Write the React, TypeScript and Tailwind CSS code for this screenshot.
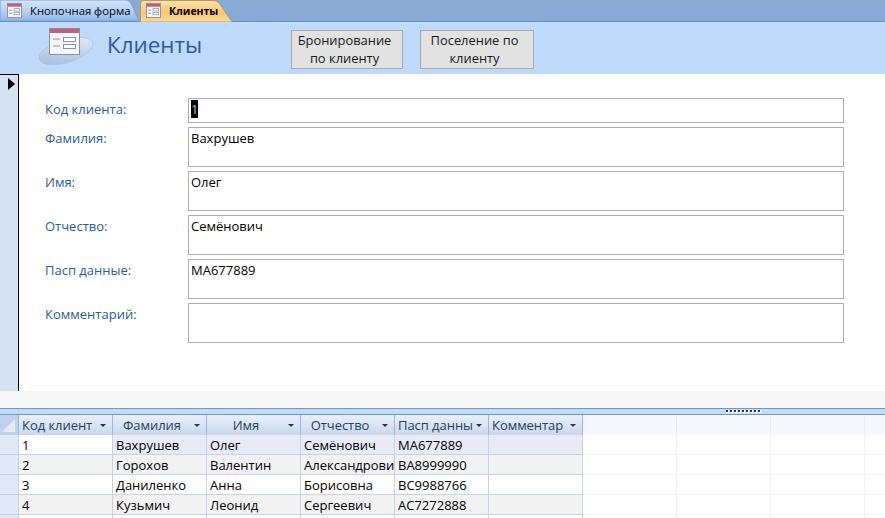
import React from "react";

const fontClass = "font-['Open_Sans','Noto_Sans',sans-serif]";

function FormGlyph(props: { size: number }) {
  return (
    <svg width={props.size} height={props.size} viewBox="0 0 16 16" className="shrink-0">
      <rect x="0.5" y="0.5" width="15" height="15" fill="#f5f6f8" stroke="#8e8e9c" />
      <rect x="1" y="1" width="14" height="3" fill="#c45f7f" />
      <path d="M2.5 7.5h3M2.5 11h3" stroke="#8a94a8" fill="none" />
      <rect x="7.5" y="6" width="6" height="2.5" fill="#fff" stroke="#8a94a8" strokeWidth="0.8" />
      <rect x="7.5" y="10" width="6" height="2.5" fill="#fff" stroke="#8a94a8" strokeWidth="0.8" />
    </svg>
  );
}

function TabBar() {
  return (
    <div className="flex h-[22px] bg-[#8aaad6] border-b border-[#6a93c8]">
      <div className="relative w-[140px] h-[21px] shrink-0">
        <svg className="absolute inset-0" width="140" height="21" viewBox="0 0 140 21">
          <defs>
            <linearGradient id="tabOff" x1="0" y1="0" x2="0" y2="1">
              <stop offset="0" stopColor="#d5e5fa" />
              <stop offset="0.5" stopColor="#b8d2f4" />
              <stop offset="1" stopColor="#8db6ea" />
            </linearGradient>
          </defs>
          <path d="M0 0H126C131 0 133 8 139 21H0Z" fill="url(#tabOff)" stroke="#7d9fcf" />
        </svg>
        <div className="relative flex items-center h-full pl-[7px] gap-[8px]">
          <FormGlyph size={15} />
          <span className="text-[11.3px] leading-[14px] text-black whitespace-nowrap">Кнопочная форма</span>
        </div>
      </div>
      <div className="relative w-[93px] h-[22px] shrink-0">
        <svg className="absolute inset-0" width="93" height="22" viewBox="0 0 93 22">
          <defs>
            <linearGradient id="tabOn" x1="0" y1="0" x2="0" y2="1">
              <stop offset="0" stopColor="#fde3ab" />
              <stop offset="0.55" stopColor="#fdc66e" />
              <stop offset="1" stopColor="#fbdc95" />
            </linearGradient>
          </defs>
          <path d="M0.5 22V4Q0.5 0.5 4 0.5H74C80 0.5 84 12 92 21.5V22Z" fill="url(#tabOn)" stroke="#b09a68" />
        </svg>
        <div className="relative flex items-center h-[21px] pl-[6px] gap-[8px]">
          <FormGlyph size={15} />
          <span className="text-[10.5px] leading-[14px] font-bold text-black whitespace-nowrap">Клиенты</span>
        </div>
      </div>
    </div>
  );
}

function HeaderLogo() {
  return (
    <svg width="56" height="38" viewBox="0 0 56 38" className="shrink-0">
      <defs>
        <linearGradient id="oval" x1="0" y1="1" x2="1" y2="0">
          <stop offset="0" stopColor="#9db8dc" />
          <stop offset="1" stopColor="#e8f1fc" />
        </linearGradient>
      </defs>
      <ellipse cx="28" cy="23" rx="28" ry="11.5" transform="rotate(-17 28 23)" fill="url(#oval)" stroke="#a5bcdc" strokeWidth="0.6" />
      <rect x="11.5" y="0.5" width="30" height="26" fill="#f6f7fa" stroke="#8b8d9b" />
      <rect x="12" y="1" width="29" height="4" fill="#c45f7f" />
      <path d="M15 11h7M15 18h7" stroke="#8a94a8" fill="none" />
      <rect x="25.5" y="9.5" width="12" height="4" fill="#fff" stroke="#8a94a8" />
      <rect x="25.5" y="16.5" width="12" height="4" fill="#fff" stroke="#8a94a8" />
    </svg>
  );
}

function HeaderButton(props: { width: string; lines: string[] }) {
  return (
    <button
      type="button"
      className={`${props.width} h-[39px] shrink-0 bg-[#e2e2e2] border border-[#a9a9a9] flex flex-col items-center justify-center pr-[5px] pb-[1px] text-[12.9px] leading-[18px] text-[#1a1a1a]`}
    >
      {props.lines.map((line) => (
        <span key={line}>{line}</span>
      ))}
    </button>
  );
}

function FormHeader() {
  return (
    <div className="flex h-[52px] bg-[#bfdbfb]">
      <div className="flex items-start pl-[38px] pt-[6px] w-[291px] shrink-0">
        <HeaderLogo />
        <span className="ml-[13px] mt-[2px] text-[22.4px] leading-[30px] text-[#2a5a9f]">Клиенты</span>
      </div>
      <div className="flex items-start pt-[8px] gap-[17px]">
        <HeaderButton width="w-[112px]" lines={["Бронирование", "по клиенту"]} />
        <HeaderButton width="w-[114px]" lines={["Поселение по", "клиенту"]} />
      </div>
    </div>
  );
}

const fields = [
  { label: "Код клиента:", value: "1", height: "h-[25px]", selected: true },
  { label: "Фамилия:", value: "Вахрушев", height: "h-[40px]" },
  { label: "Имя:", value: "Олег", height: "h-[40px]" },
  { label: "Отчество:", value: "Семёнович", height: "h-[40px]" },
  { label: "Пасп данные:", value: "МА677889", height: "h-[40px]" },
  { label: "Комментарий:", value: "", height: "h-[40px]" },
];

function FormBody() {
  return (
    <div className="flex h-[317px]">
      <div className="w-[19px] shrink-0 bg-[#d3e3f3] border-r border-t border-black pt-[2px]">
        <svg width="10" height="14" viewBox="0 0 10 14" className="ml-[7px]">
          <path d="M1 1l7 6-7 6z" fill="#000" />
        </svg>
      </div>
      <div className="flex-1 bg-white flex flex-col gap-[4px] pt-[24px] pl-[26px]">
        {fields.map((f) => (
          <div key={f.label} className="flex">
            <div className="w-[143px] shrink-0 text-[13px] leading-[18px] pt-[2px] text-[#2c5a9c]">{f.label}</div>
            <div className={`${f.height} w-[656px] border border-[#adadad] px-[2px] text-[13px] leading-[18px] pt-[1px] text-black`}>
              {f.selected ? <span className="bg-black text-[#8fc4f0]">{f.value}</span> : f.value}
            </div>
          </div>
        ))}
      </div>
    </div>
  );
}

function Splitter() {
  return (
    <div className="flex items-center h-[7px] bg-[#c4dbf8] border-y border-[#6c98d2]">
      <div className="ml-[726px] flex gap-[1px]">
        {[0, 1, 2, 3, 4, 5, 6, 7, 8].map((i) => (
          <span key={i} className="w-[3px] h-[3px] bg-[#333] border-r border-b border-white" />
        ))}
      </div>
    </div>
  );
}

const columns = [
  { title: "Код клиент", left: true },
  { title: "Фамилия" },
  { title: "Имя" },
  { title: "Отчество" },
  { title: "Пасп данны", left: true },
  { title: "Комментар", left: true },
];

const rows = [
  { cells: ["1", "Вахрушев", "Олег", "Семёнович", "МА677889", ""], bg: "bg-[#e8ebf5]" },
  { cells: ["2", "Горохов", "Валентин", "Александрович", "ВА8999990", ""], bg: "bg-[#f2f2f2]" },
  { cells: ["3", "Даниленко", "Анна", "Борисовна", "ВС9988766", ""], bg: "bg-white" },
  { cells: ["4", "Кузьмич", "Леонид", "Сергеевич", "АС7272888", ""], bg: "bg-[#f2f2f2]" },
  { cells: ["", "", "", "", "", ""], bg: "bg-white" },
];

const emptyCols = [0, 1, 2];

function Datasheet() {
  return (
    <div className="flex flex-col">
      <div className="flex h-[20px]">
        <div className="w-[19px] shrink-0 bg-[#bdd2ef] border-r border-[#9db8dc]">
          <svg width="18" height="20" viewBox="0 0 18 20">
            <path d="M15 4V17H2Z" fill="#e6ebf2" />
          </svg>
        </div>
        {columns.map((c) => (
          <div
            key={c.title}
            className="w-[94px] shrink-0 flex items-center border-r border-[#9db8dc] bg-gradient-to-b from-[#e9f0fa] to-[#c9d8ec] pl-[3px] pr-[6px]"
          >
            <span className={`w-[72px] text-[13px] tracking-[-0.05px] leading-[18px] text-[#253f63] whitespace-nowrap ${c.left ? "" : "text-center"}`}>
              {c.title}
            </span>
            <span className="ml-auto w-0 h-0 border-x-[3px] border-x-transparent border-t-[3px] border-t-[#333]" />
          </div>
        ))}
        {emptyCols.map((i) => (
          <div key={i} className="w-[94px] shrink-0 bg-[#f5f6fe] border-r border-[#e9ebf6]" />
        ))}
        <div className="flex-1 bg-[#f5f6fe]" />
      </div>
      {rows.map((row, r) => (
        <div key={r} className="flex h-[20px]">
          <div className="w-[19px] shrink-0 bg-[#e1e9f6] border-r border-b border-[#c5d2e8]" />
          {row.cells.map((cell, i) => (
            <div
              key={i}
              className={`w-[94px] shrink-0 border-r border-b border-[#c5d2e8] pl-[3px] pt-[1px] text-[13px] leading-[18px] text-black whitespace-nowrap overflow-hidden ${r === 0 && i === 0 ? "bg-white" : row.bg}`}
            >
              {cell}
            </div>
          ))}
          {emptyCols.map((i) => (
            <div key={i} className="w-[94px] shrink-0 bg-white border-r border-b border-[#f2f3f8]" />
          ))}
          <div className="flex-1 bg-white border-b border-[#f2f3f8]" />
        </div>
      ))}
    </div>
  );
}

export default function App() {
  return (
    <div className={`${fontClass} w-[885px] h-[518px] overflow-hidden bg-white`}>
      <TabBar />
      <FormHeader />
      <FormBody />
      <div className="h-[17px] bg-[#f6f6f6]" />
      <Splitter />
      <Datasheet />
    </div>
  );
}
